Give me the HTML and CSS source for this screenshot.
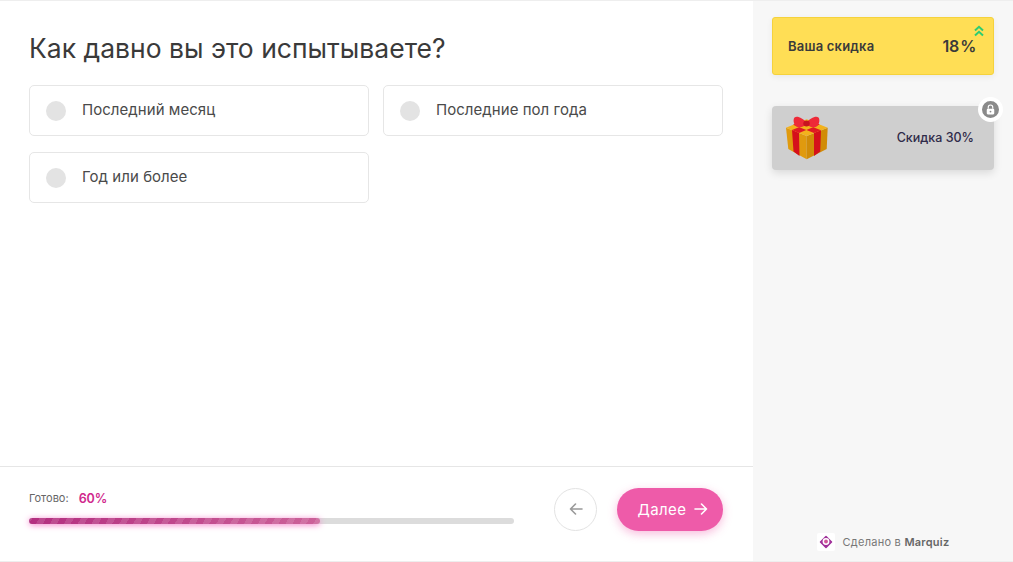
FILE: index.html
```html
<!DOCTYPE html>
<html lang="ru">
<head>
    <meta charset="UTF-8">
    <meta name="viewport" content="width=device-width, initial-scale=1.0">
    <title>Marquiz</title>
    <link rel="stylesheet" href="styles.css">
</head>
<body>
    <div class="quiz">
        <main class="main">
            <section class="question">
                <h1>Как давно вы это испытываете?</h1>
                <div class="answers">
                    <label class="answer"><span class="radio"></span><span class="answer-text">Последний месяц</span></label>
                    <label class="answer"><span class="radio"></span><span class="answer-text">Последние пол года</span></label>
                    <label class="answer"><span class="radio"></span><span class="answer-text">Год или более</span></label>
                </div>
            </section>
            <footer class="footer">
                <div class="progress">
                    <div class="progress-label">Готово: <b>60%</b></div>
                    <div class="progress-track"><div class="progress-bar" style="width: 60%"></div></div>
                </div>
                <button class="btn-back" aria-label="Назад">
                    <svg width="14" height="14" viewBox="0 0 14 14" fill="none" stroke="#999" stroke-width="1.6" stroke-linecap="round" stroke-linejoin="round"><path d="M13 7H1.500M6.500 2 1.500 7l5 5"/></svg>
                </button>
                <button class="btn-next">Далее
                    <svg width="14" height="14" viewBox="0 0 14 14" fill="none" stroke="#fff" stroke-width="1.6" stroke-linecap="round" stroke-linejoin="round"><path d="M1 7h11.500M7.500 2l5 5-5 5"/></svg>
                </button>
            </footer>
        </main>
        <aside class="side">
            <div class="discount">
                <span>Ваша скидка</span>
                <b>18 %</b>
                <svg class="chevrons" width="10" height="12" viewBox="0 0 10 12" fill="none" stroke="#2ecc71" stroke-width="2"><path d="M1 5.500 5 1.800l4 3.700M1 10.500 5 6.800l4 3.700"/></svg>
            </div>
            <div class="prize">
                <svg class="gift" width="46" height="46" viewBox="0 0 46 46">
                    <path d="M1 12.700 21.700 21v23.300L3.300 34z" fill="#e09a0e"/>
                    <path d="M42.700 12.700 21.700 21v23.300L41.700 34z" fill="#d18c08"/>
                    <path d="M1 12.700 21.700 4.300l21 8.400L21.700 21z" fill="#f3b21c"/>
                    <path d="M7 15.100 14 18 14.500 41 8.500 36.500zM29 18 36 15.300 35.200 36.600 29 41z" fill="#d5101b"/>
                    <path d="M7 15.100 27.700 6.700 34.700 9.600 14 18zM36 15.300 15 6.900 8 9.700 29 18z" fill="#e01a22"/>
                    <path d="M21.500 8C18 3 12 .5 9.500 2.500 7.500 5 9 11 12.500 12c3.500.8 7 0 9-4zM21.500 8C25 3 31 .5 33.500 2.500 35.500 5 34 11 30.500 12c-3.500.8-7 0-9-4z" fill="#ee2a38"/>
                    <ellipse cx="21.500" cy="8.500" rx="3.200" ry="3" fill="#c8141f"/>
                </svg>
                <span class="prize-text">Скидка 30%</span>
                <span class="lock">
                    <svg viewBox="0 0 12 14"><path d="M3 6V4a3 3 0 0 1 6 0v2" fill="none" stroke="#fff" stroke-width="1.500"/><rect x="1" y="6" width="10" height="7.500" rx="1.500" fill="#fff"/><circle cx="6" cy="9.700" r="1.200" fill="#8a8a8a"/></svg>
                </span>
            </div>
            <div class="made">
                <svg width="18" height="18" viewBox="0 0 18 18"><rect width="18" height="18" rx="2" fill="#fff"/><path d="M9 3.500 14.500 9 9 14.500 3.500 9z" fill="#a0309a" stroke="#a0309a" stroke-width="1.500" stroke-linejoin="round"/><circle cx="9" cy="8.500" r="3.400" fill="#fff"/><circle cx="9" cy="8.500" r="1.900" fill="#d0559a"/></svg>
                <span>Сделано в <b>Marquiz</b></span>
            </div>
        </aside>
    </div>
</body>
</html>
```

FILE: styles.css
```css
* {
    box-sizing: border-box;
}
body {
    margin: 0;
    font-family: Inter, "Noto Sans", sans-serif;
    color: #3a3a3a;
    background: #fff;
}
.quiz {
    display: flex;
    height: 562px;
    border-top: 1px solid #eeeeee;
    border-bottom: 1px solid #eeeeee;
}
.main {
    width: 753px;
    display: flex;
    flex-direction: column;
}
.question {
    flex: 1;
    padding: 30px 30px 0 29px;
}
h1 {
    margin: 0 0 20px;
    font-size: 26.500px;
    line-height: 34px;
    font-weight: 400;
    letter-spacing: 0;
}
.answers {
    display: grid;
    grid-template-columns: 340px 340px;
    gap: 16px 14px;
}
.answer {
    display: flex;
    align-items: center;
    height: 51px;
    padding-left: 16px;
    font-size: 15px;
    letter-spacing: 0.050px;
    color: #4a4a4a;
    border: 1px solid #e6e6e6;
    border-radius: 5px;
}
.answer-text {
    margin-top: -2px;
}
.radio {
    width: 20px;
    height: 20px;
    margin-right: 16px;
    border-radius: 50%;
    background: #e3e3e3;
}
.footer {
    height: 95px;
    display: flex;
    align-items: center;
    padding: 0 30px 10px 29px;
    border-top: 1px solid #e6e6e6;
}
.progress {
    width: 485px;
    margin: 0 40px 4px 0;
}
.progress-label {
    display: flex;
    align-items: center;
    gap: 10px;
    margin-bottom: 12px;
    font-size: 11px;
    color: #666;
}
.progress-label b {
    font-size: 12.500px;
    font-weight: 600;
    color: #d0288c;
}
.progress-track {
    height: 6px;
    border-radius: 3px;
    background: #dcdcdc;
}
.progress-bar {
    height: 100%;
    border-radius: 3px;
    background: repeating-linear-gradient(-60deg, rgba(255, 255, 255, 0.12) 0 6px, rgba(255, 255, 255, 0) 6px 12px), linear-gradient(90deg, #b32f80, #cc6199);
    box-shadow: 0 1px 6px #f57fcb;
}
.btn-back {
    width: 43px;
    height: 43px;
    margin-right: 20px;
    display: flex;
    align-items: center;
    justify-content: center;
    background: #fff;
    border: 1px solid #e3e3e3;
    border-radius: 50%;
}
.btn-next {
    width: 106px;
    height: 43px;
    display: flex;
    align-items: center;
    justify-content: center;
    gap: 8px;
    padding: 0 0 0 6px;
    font-family: inherit;
    font-size: 15px;
    letter-spacing: 0.400px;
    color: #fff;
    background: #ee5ba9;
    border: none;
    border-radius: 22px;
    box-shadow: 0 3px 10px rgba(238, 91, 169, 0.4);
}
.side {
    flex: 1;
    display: flex;
    flex-direction: column;
    padding: 16px 19px 0;
    background: #f7f7f7;
}
.discount {
    position: relative;
    height: 58px;
    display: flex;
    align-items: center;
    justify-content: space-between;
    padding: 0 17px 0 15px;
    font-size: 13px;
    font-weight: 600;
    letter-spacing: 0.200px;
    background: #ffde55;
    border: 1px solid #f5d23c;
    border-radius: 3px;
    box-shadow: 0 2px 6px rgba(0, 0, 0, 0.06);
}
.discount b {
    font-size: 16px;
    font-weight: 600;
    letter-spacing: -0.300px;
    word-spacing: -2.500px;
}
.chevrons {
    position: absolute;
    top: 7px;
    right: 9px;
}
.prize {
    position: relative;
    height: 64px;
    margin-top: 31px;
    display: flex;
    align-items: center;
    justify-content: space-between;
    padding: 0 20px 0 13px;
    font-size: 12.500px;
    font-weight: 500;
    color: #2f2b4a;
    background: #cfcfcf;
    border-radius: 4px;
    box-shadow: 0 3px 8px rgba(0, 0, 0, 0.12);
}
.prize-text {
    margin-top: -2px;
}
.lock {
    position: absolute;
    top: -9px;
    right: -9px;
    width: 25px;
    height: 25px;
    display: flex;
    align-items: center;
    justify-content: center;
    background: #8a8a8a;
    border: 4px solid #fff;
    border-radius: 50%;
}
.lock svg {
    width: 9px;
    height: 11px;
}
.made {
    margin-top: auto;
    height: 38px;
    display: flex;
    align-items: center;
    justify-content: center;
    gap: 8px;
    font-size: 11px;
    letter-spacing: 0.250px;
    color: #777;
}
.made b {
    font-weight: 600;
    color: #666;
}
```
